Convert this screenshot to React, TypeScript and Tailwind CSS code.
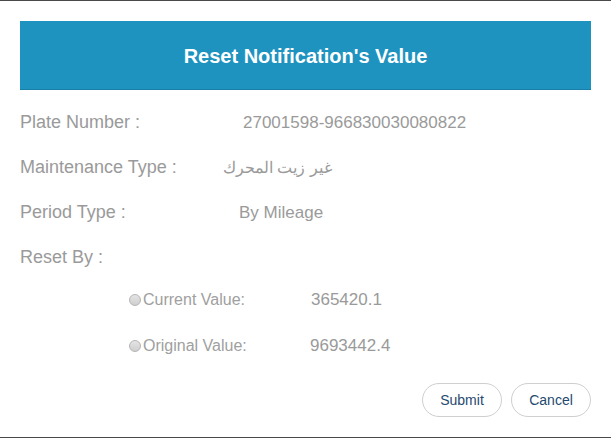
export default function App() {
  const rows = [
    { label: "Plate Number :", value: "27001598-966830030080822", cls: "ml-[20px] text-[17px]" },
    { label: "Maintenance Type :", value: "غير زيت المحرك", cls: "text-[16px]" },
    { label: "Period Type :", value: "By Mileage", cls: "ml-[16px] text-[17px]" },
  ];

  return (
    <div className="w-[611px] h-[438px] bg-white border-t border-b border-[#4a4a4a] font-['Liberation_Sans',Arial,sans-serif] flex flex-col px-5 pt-5">
      <div className="h-[69px] bg-[#1e93bf] border-b border-[#1a7fa6] flex items-center justify-center">
        <h1 className="text-white font-bold text-[20px] pt-[2px]">Reset Notification's Value</h1>
      </div>

      <div className="mt-[10px] flex flex-col">
        {rows.map((r) => (
          <div key={r.label} className="h-[45px] flex items-center text-[18px] text-[#9a9a9a]">
            <span className="w-[203px] shrink-0">{r.label}</span>
            <span className={r.cls}>{r.value}</span>
          </div>
        ))}
        <div className="h-[45px] flex items-center text-[18px] text-[#9a9a9a]">Reset By :</div>
      </div>

      <div className="flex flex-col pl-[109px] text-[16px] text-[#a0a0a0] -mt-[3px]">
        {[
          { label: "Current Value:", value: "365420.1", v: "w-[168px]" },
          { label: "Original Value:", value: "9693442.4", v: "w-[167px]" },
        ].map((r) => (
          <div key={r.label} className="h-[46px] flex items-center">
            <span className="w-[12px] h-[12px] rounded-full border border-[#b5b5b5] bg-gradient-to-b from-[#e4e4e4] to-[#cfcfcf] mr-[2px]" />
            <span className={r.v}>{r.label}</span>
            <span className="text-[17px] text-[#9a9a9a]">{r.value}</span>
          </div>
        ))}
      </div>

      <div className="mt-[14px] flex justify-end gap-[9px]">
        <button className="w-[80px] h-[34px] rounded-full border border-[#cfcfcf] bg-white text-[14px] text-[#1f4a70]">Submit</button>
        <button className="w-[80px] h-[34px] rounded-full border border-[#cfcfcf] bg-white text-[14px] text-[#1f4a70]">Cancel</button>
      </div>
    </div>
  );
}
